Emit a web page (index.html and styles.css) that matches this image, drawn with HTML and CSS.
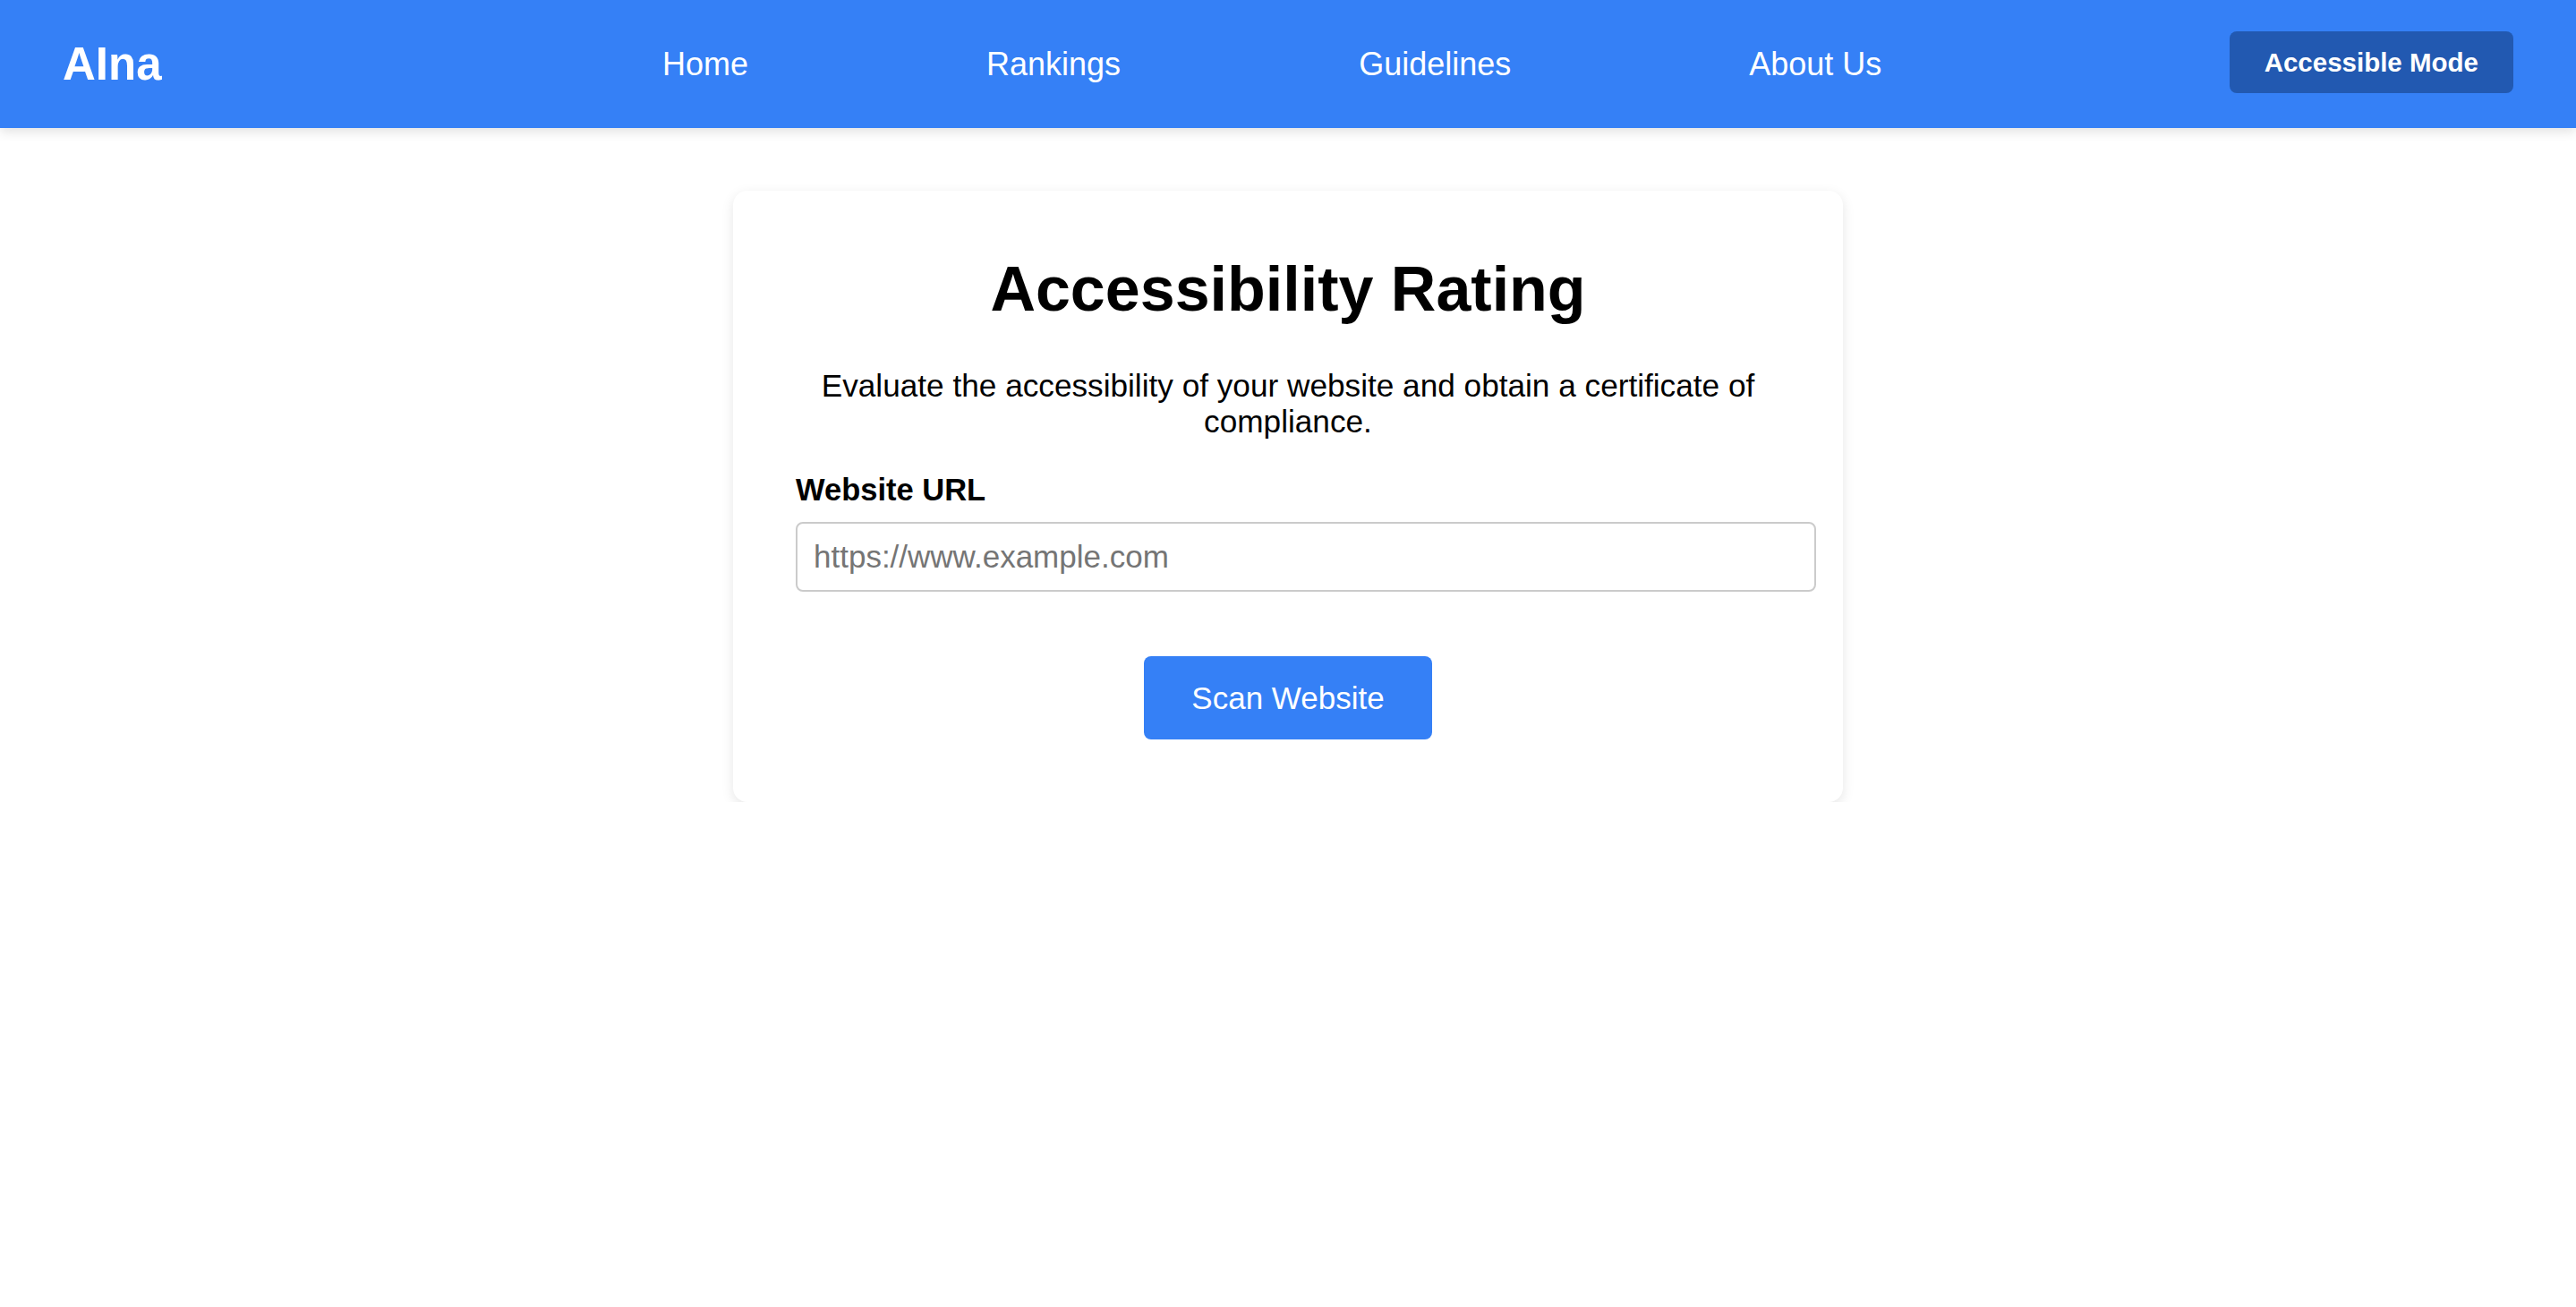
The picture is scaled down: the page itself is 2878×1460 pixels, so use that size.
FILE: index.html
```html
<!DOCTYPE html>
<html lang="en">
<head>
<meta charset="utf-8">
<title>AIna - Accessibility Rating</title>
<link rel="stylesheet" href="styles.css">
</head>
<body>
<header class="site-header">
  <div class="logo">AIna</div>
  <nav class="main-nav">
    <a href="#" class="nav-link">Home</a>
    <a href="#" class="nav-link">Rankings</a>
    <a href="#" class="nav-link">Guidelines</a>
    <a href="#" class="nav-link">About Us</a>
  </nav>
  <button class="mode-btn" type="button">Accessible Mode</button>
</header>
<main class="page">
  <section class="card">
    <h1 class="card-title">Accessibility Rating</h1>
    <p class="card-sub">Evaluate the accessibility of your website and obtain a certificate of compliance.</p>
    <form class="scan-form">
      <label class="field-label" for="url">Website URL</label>
      <input class="url-input" id="url" type="text" placeholder="https://www.example.com">
      <div class="actions">
        <button class="scan-btn" type="button">Scan Website</button>
      </div>
    </form>
  </section>
</main>
</body>
</html>
```

FILE: styles.css
```css
* { box-sizing: border-box; }

html, body {
  margin: 0;
  padding: 0;
  background: #ffffff;
  font-family: "Liberation Sans", Arial, Helvetica, sans-serif;
  color: #000;
}

.site-header {
  height: 143px;
  background: #3580f6;
  display: flex;
  align-items: center;
  padding: 0 70px;
  box-shadow: 0 4px 12px rgba(0, 0, 0, 0.12);
  position: relative;
  z-index: 1;
}

.logo {
  flex: 0 0 670px;
  color: #fff;
  font-weight: 700;
  font-size: 51px;
  line-height: 60px;
}

.main-nav {
  display: flex;
  gap: 266px;
}

.nav-link {
  color: #fff;
  text-decoration: none;
  font-size: 36px;
  line-height: 44px;
}

.mode-btn {
  margin-left: auto;
  margin-bottom: 4px;
  height: 69px;
  padding: 0 39px;
  background: #2259b1;
  color: #fff;
  border: none;
  border-radius: 8px;
  font-family: inherit;
  font-weight: 700;
  font-size: 29.5px;
  cursor: pointer;
}

.page {
  display: flex;
  justify-content: center;
  padding-top: 70px;
}

.card {
  width: 1240px;
  background: #fff;
  border-radius: 16px;
  box-shadow: 0 4px 14px rgba(0, 0, 0, 0.1);
  padding: 70px;
}

.card-title {
  margin: 0;
  text-align: center;
  font-size: 70px;
  line-height: 80px;
  font-weight: 700;
}

.card-sub {
  margin: 48px 0 0;
  text-align: center;
  font-size: 35.2px;
  line-height: 40px;
}

.scan-form {
  display: flex;
  flex-direction: column;
  margin-top: 36px;
}

.field-label {
  font-weight: 700;
  font-size: 34.5px;
  line-height: 40px;
}

.url-input {
  box-sizing: content-box;
  width: 100%;
  margin-top: 16px;
  height: 74px;
  padding: 0 18px;
  border: 2px solid #cbcbcb;
  border-radius: 8px;
  font-family: inherit;
  font-size: 35px;
  color: #000;
  outline: none;
}

.url-input::placeholder {
  color: #757575;
}

.actions {
  display: flex;
  justify-content: center;
  margin-top: 72px;
}

.scan-btn {
  height: 93px;
  padding: 0 53px;
  background: #3580f6;
  color: #fff;
  border: none;
  border-radius: 8px;
  font-family: inherit;
  font-size: 35px;
  cursor: pointer;
}
```
